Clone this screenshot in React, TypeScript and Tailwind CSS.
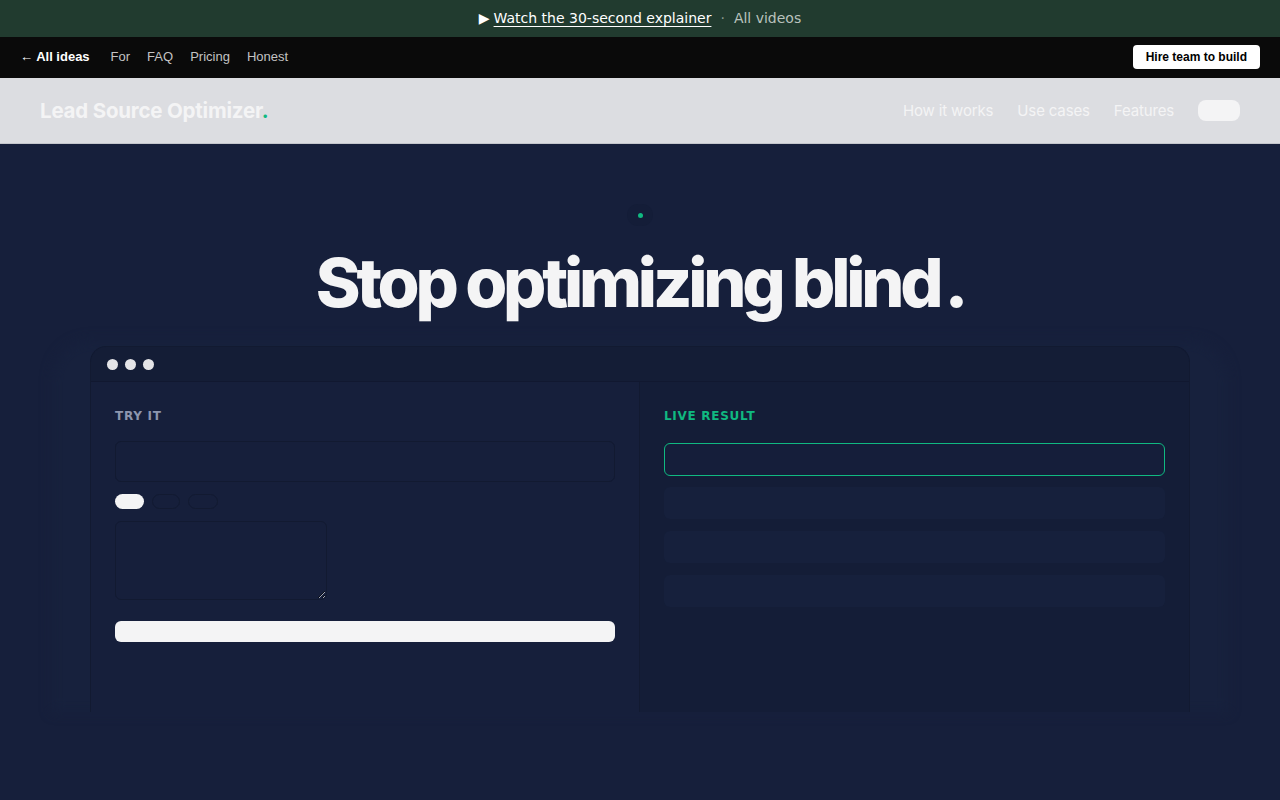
import { useState } from "react";

const sans = { fontFamily: '"DejaVu Sans", "Liberation Sans", sans-serif' };
const display = { fontFamily: 'Inter, "Noto Sans", sans-serif' };

const chipWidths = ["w-[29px]", "w-[28px]", "w-[30px]"];

export default function App() {
  const [mode, setMode] = useState(0);

  return (
    <div className="min-h-screen bg-[#161f3b]" style={sans}>
      {/* banner */}
      <div className="h-[37px] bg-[#213b2f] flex items-center justify-center text-[14px] text-white">
        <span className="mr-[4px]">▶</span>
        <a className="underline underline-offset-[3px] decoration-1">Watch the 30-second explainer</a>
        <span className="mx-[9px] text-[#8a9a90]">·</span>
        <a className="text-[#b9c2bd]">All videos</a>
      </div>

      {/* top nav */}
      <div className="h-[41px] bg-[#0a0a0a] flex items-center px-5 pb-[2px] text-[13px]" style={{ fontFamily: '"Liberation Sans", Arial, sans-serif' }}>
        <a className="text-white font-bold">← All ideas</a>
        <nav className="flex gap-[17px] ml-[21px] text-[#c3c3c3]">
          <a>For</a>
          <a>FAQ</a>
          <a>Pricing</a>
          <a>Honest</a>
        </nav>
        <button className="ml-auto h-6 px-[13px] rounded bg-white text-black text-[12px] font-bold">Hire team to build</button>
      </div>

      {/* product header */}
      <header className="h-[66px] bg-[#dcdde1] border-b border-[#c4c6cc] flex items-center px-10" style={display}>
        <div className="text-[20.5px] font-bold tracking-[-0.01em] text-[#f4f4f5] pt-[2px]">
          Lead Source Optimizer<span className="text-[#10b981]">.</span>
        </div>
        <nav className="ml-auto flex items-center gap-6 text-[15px] text-[#f4f4f5] tracking-[-0.01em]">
          <a className="pt-[2px]">How it works</a>
          <a className="pt-[2px]">Use cases</a>
          <a className="pt-[2px]">Features</a>
          <button className="w-[42px] h-[21px] rounded-lg bg-[#f4f4f5]"></button>
        </nav>
      </header>

      {/* hero */}
      <section className="flex flex-col items-center pt-[60px]" style={display}>
        <div className="h-[22px] w-[26px] rounded-full bg-[#141d38] flex items-center justify-center">
          <span className="w-[5px] h-[5px] rounded-full bg-[#10b981]"></span>
        </div>
        <h1 className="mt-[22px] text-[68px] leading-[1] font-extrabold tracking-[-0.062em] text-[#f4f4f5]">
          Stop optimizing blind<span className="ml-[5px]">.</span>
        </h1>

        <div className="relative mt-[30px] w-[1100px]">
          <div className="absolute -inset-x-[38px] -top-[6px] bottom-0 rounded-t-[40px] bg-[#17213d] blur-[6px]"></div>
          <div className="relative rounded-t-[16px] border border-b-0 border-[#121a31] bg-[#151e39] overflow-hidden">
            <div className="h-[35px] flex items-center gap-[7px] px-4 bg-[#141d36] border-b border-[#111830]">
              <span className="w-[11px] h-[11px] rounded-full bg-[#e4e4e7]"></span>
              <span className="w-[11px] h-[11px] rounded-full bg-[#e4e4e7]"></span>
              <span className="w-[11px] h-[11px] rounded-full bg-[#e4e4e7]"></span>
            </div>
            <div className="grid grid-cols-2 h-[330px]" style={sans}>
              <div className="px-6 pt-[25px] bg-[#161f3b] border-r border-[#121a31]">
                <div className="text-[12px] font-bold tracking-[0.06em] text-[#8d96ae]">TRY IT</div>
                <div className="mt-4 h-[41px] rounded-md border border-[#121a31] bg-[#161f3b]"></div>
                <div className="mt-3 flex gap-2">
                  {[0, 1, 2].map((i) => (
                    <button
                      key={i}
                      onClick={() => setMode(i)}
                      className={`${chipWidths[i]} h-[15px] rounded-full ${
                        mode === i ? "bg-[#f4f4f5]" : "border border-[#121a31]"
                      }`}
                    ></button>
                  ))}
                </div>
                <textarea className="mt-3 block w-[212px] h-[79px] rounded-md border border-[#121a31] bg-[#161f3b] outline-none"></textarea>
                <button className="mt-[21px] w-full h-[21px] rounded-md bg-[#f4f4f5]"></button>
              </div>
              <div className="px-6 pt-[25px] bg-[#141d37]">
                <div className="text-[12px] font-bold tracking-[0.06em] text-[#10b981]">LIVE RESULT</div>
                <div className="mt-[18px] h-[33px] rounded-md border border-[#10b981] bg-[#151e3a]"></div>
                <div className="mt-[11px] flex flex-col gap-3">
                  <div className="h-[32px] rounded-md bg-[#16203c]"></div>
                  <div className="h-[32px] rounded-md bg-[#16203c]"></div>
                  <div className="h-[32px] rounded-md bg-[#16203c]"></div>
                </div>
              </div>
            </div>
          </div>
        </div>
      </section>
    </div>
  );
}
